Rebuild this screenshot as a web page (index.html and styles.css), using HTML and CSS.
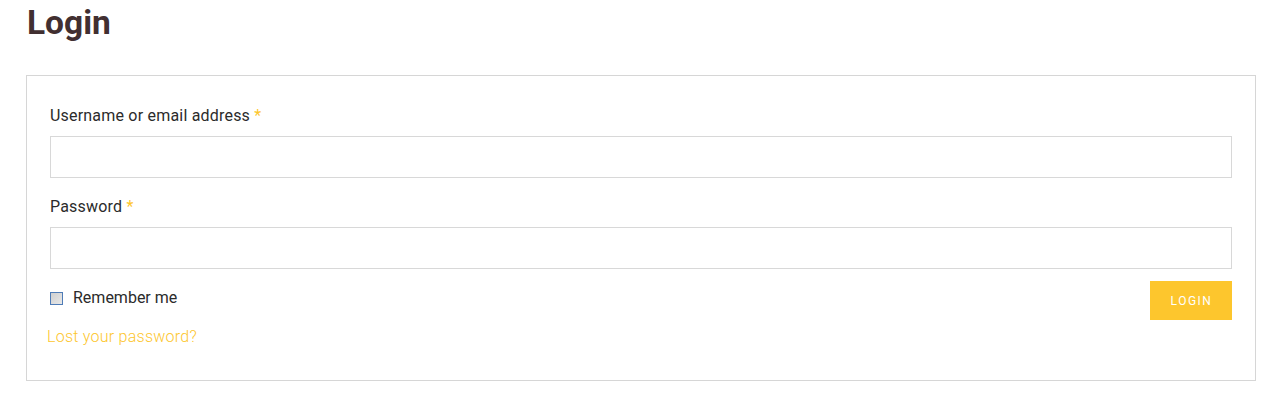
FILE: index.html
```html
<!DOCTYPE html>
<html>
<head>
<meta charset="utf-8">
<link rel="stylesheet" href="styles.css">
</head>
<body>
<div class="page">
  <h2 class="title">Login</h2>
  <form class="login-box">
    <div class="field">
      <label class="label">Username or email address <span class="req">*</span></label>
      <div class="input"></div>
    </div>
    <div class="field">
      <label class="label">Password <span class="req">*</span></label>
      <div class="input"></div>
    </div>
    <div class="actions">
      <label class="remember"><span class="check"></span>Remember me</label>
      <button type="button" class="btn">LOGIN</button>
    </div>
    <a class="lost">Lost your password?</a>
  </form>
</div>
</body>
</html>
```
FILE: styles.css
```css
html, body { margin: 0; padding: 0; background: #fff; }
body { font-family: Roboto, "Liberation Sans", sans-serif; color: #333; }
.page { padding: 0 32px 0 26px; }
.title {
  margin: 0;
  padding: 3px 0 0 1px;
  font-size: 33.5px;
  line-height: 40px;
  font-weight: 700;
  color: #412f31;
}
.login-box {
  margin-top: 32px;
  border: 1px solid #d6d6d6;
  padding: 30px 23px 33px 23px;
  width: 1182px;
}
.field { margin-bottom: 19px; }
.field + .field { margin-bottom: 0; }
.label {
  display: block;
  font-size: 16px;
  line-height: 20px;
  letter-spacing: 0.2px;
  color: #2b2b2b;
  margin-bottom: 10px;
}
.req { color: #fdc62d; }
.input {
  height: 40px;
  border: 1px solid #d8d8d8;
  box-sizing: content-box;
}
.actions {
  display: flex;
  justify-content: space-between;
  align-items: flex-start;
  margin-top: 12px;
}
.remember {
  display: flex;
  align-items: center;
  font-size: 16px;
  color: #2b2b2b;
  line-height: 20px;
  margin-top: 7px;
}
.check {
  width: 11px;
  height: 11px;
  border: 1px solid #4f7cb7;
  background: linear-gradient(135deg, #cfcfcf, #e8e8e8);
  margin-right: 10px;
}
.btn {
  width: 82px;
  height: 39px;
  border: none;
  background: #fdc62d;
  color: #fff;
  font-family: Roboto, "Liberation Sans", sans-serif;
  font-size: 12px;
  letter-spacing: 1.5px;
  font-weight: 400;
  padding: 0 0 0 1px;
}
.lost {
  display: block;
  margin-left: -3px;
  margin-top: 7px;
  font-size: 16px;
  line-height: 20px;
  letter-spacing: 0.25px;
  font-weight: 300;
  color: #fdc62d;
}
```
